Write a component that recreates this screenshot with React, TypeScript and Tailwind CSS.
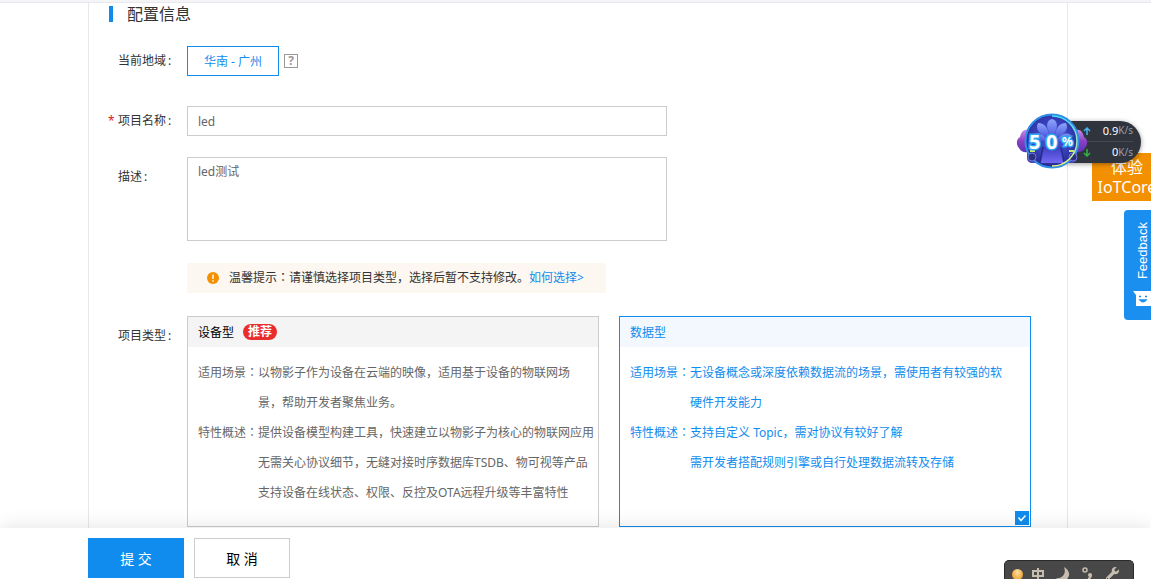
import { useState } from 'react';
import type { ReactNode } from 'react';
import { FaMoon, FaWrench } from 'react-icons/fa';

const projectTypes = [
  {
    id: 'device',
    title: '设备型',
    recommended: true,
    details: [
      {
        name: '适用场景',
        lines: ['以物影子作为设备在云端的映像，适用基于设备的物联网场', '景，帮助开发者聚焦业务。'],
      },
      {
        name: '特性概述',
        lines: [
          '提供设备模型构建工具，快速建立以物影子为核心的物联网应用',
          '无需关心协议细节，无缝对接时序数据库TSDB、物可视等产品',
          '支持设备在线状态、权限、反控及OTA远程升级等丰富特性',
        ],
      },
    ],
  },
  {
    id: 'data',
    title: '数据型',
    recommended: false,
    details: [
      {
        name: '适用场景',
        lines: ['无设备概念或深度依赖数据流的场景，需使用者有较强的软', '硬件开发能力'],
      },
      {
        name: '特性概述',
        lines: ['支持自定义 Topic，需对协议有较好了解', '需开发者搭配规则引擎或自行处理数据流转及存储'],
      },
    ],
  },
];

// the TC face centres the full-width colon in its cell
function Colon() {
  return <span className="font-['Noto_Sans_CJK_TC',sans-serif] leading-none">：</span>;
}

function FieldLabel({ htmlFor, id, required, children }: { htmlFor?: string; id?: string; required?: boolean; children: ReactNode }) {
  return (
    <label htmlFor={htmlFor} id={id} className="flex w-[98px] shrink-0 pl-[19px] leading-[30px] text-[#333]">
      <span className="w-[10px] text-[#e02020]">{required ? '*' : ''}</span>
      {children}
      <span className="ml-0.5">:</span>
    </label>
  );
}

function TypeCard({ type, checked, onSelect }: { type: (typeof projectTypes)[number]; checked: boolean; onSelect: () => void }) {
  return (
    <label className={`relative block w-[412px] cursor-pointer border whitespace-nowrap ${checked ? 'border-[#108cee] text-[#108cee]' : 'border-[#ccc] text-[#666]'}`}>
      <div className={`flex h-[30px] items-center gap-[9px] px-[10px] ${checked ? 'bg-[#f3f8fe]' : 'bg-[#f4f4f4] text-black'}`}>
        <span className="pt-px">{type.title}</span>
        {type.recommended && <span className="h-4 rounded-full bg-[#e92d2d] px-[5px] leading-4 font-bold text-white">推荐</span>}
      </div>
      <dl className="px-[10px] pt-[11px] pb-[18px] leading-[30px]">
        {type.details.map((d) => (
          <div key={d.name} className="flex">
            <dt>
              {d.name}
              <Colon />
            </dt>
            <dd>
              {d.lines.map((line) => (
                <p key={line}>{line}</p>
              ))}
            </dd>
          </div>
        ))}
      </dl>
      <input
        type="radio"
        name="projectType"
        aria-label={type.title}
        checked={checked}
        onChange={onSelect}
        className="absolute right-px bottom-px size-[14px] appearance-none checked:bg-[#108cee]"
      />
      {checked && (
        <svg className="pointer-events-none absolute right-px bottom-px size-[14px]" viewBox="0 0 14 14" fill="none" stroke="#fff" strokeWidth="1.5">
          <path d="M3.5 6.5 6 9.5 10.5 4.5" />
        </svg>
      )}
    </label>
  );
}

function SpeedWidget() {
  return (
    <div className="absolute top-[109px] right-[10px] flex h-[66px] w-[125px] items-center justify-end">
      <div className="h-[42px] w-[76px] rounded-r-full bg-[#30343d] pr-2 text-right text-[11px] text-white shadow-[0_1px_5px_rgba(0,0,0,0.4)]">
        <div className="flex h-[21px] items-center border-b border-[#454a54] pl-[18px]">
          <svg className="size-2" viewBox="0 0 8 8" fill="none" stroke="#45b6f2" strokeWidth="1.5">
            <path d="M4 8V1M1 4l3-3 3 3" />
          </svg>
          <span className="flex-1">0.9</span>
          <span className="text-[10px] text-[#9a9ea6]">K/s</span>
        </div>
        <div className="flex h-[21px] items-center pl-[18px]">
          <svg className="size-2" viewBox="0 0 8 8" fill="none" stroke="#2fb344" strokeWidth="1.5">
            <path d="M4 0v7M1 4l3 3 3-3" />
          </svg>
          <span className="flex-1">0</span>
          <span className="text-[10px] text-[#9a9ea6]">K/s</span>
        </div>
      </div>
      <svg className="absolute top-0 left-0 h-[66px] w-[74px]" viewBox="0 0 74 66">
        <defs>
          <radialGradient id="dome" cx="0.5" cy="0.45" r="0.55">
            <stop offset="0" stopColor="#4b55d8" />
            <stop offset="0.7" stopColor="#343bb4" />
            <stop offset="1" stopColor="#252a8c" />
          </radialGradient>
          <linearGradient id="ear" x1="0" y1="0" x2="0" y2="1">
            <stop offset="0" stopColor="#c98aea" />
            <stop offset="0.5" stopColor="#8a3fc4" />
            <stop offset="1" stopColor="#5a35b4" />
          </linearGradient>
          <linearGradient id="petal" x1="0" y1="0" x2="0" y2="1">
            <stop offset="0" stopColor="#8fa4fa" />
            <stop offset="1" stopColor="#4b5ade" />
          </linearGradient>
          <linearGradient id="seat" x1="0" y1="0" x2="0" y2="1">
            <stop offset="0" stopColor="#3b3fc0" />
            <stop offset="1" stopColor="#7468f2" />
          </linearGradient>
          <linearGradient id="ring" x1="0" y1="0" x2="0" y2="1">
            <stop offset="0" stopColor="#43e0ff" />
            <stop offset="1" stopColor="#e6f27a" />
          </linearGradient>
        </defs>
        <path d="M12 21c-5-1-7 3-8 7-4 2-4 8-1 11 2 4 6 5 9 4z" fill="url(#ear)" />
        <path d="M60 21c5-1 7 3 8 7 4 2 4 8 1 11-2 4-6 5-9 4z" fill="url(#ear)" />
        <path d="M11 36h50v13q0 4-4 5H15q-4-1-4-5z" fill="#4641b4" />
        <circle cx="36" cy="32" r="26.500" fill="url(#dome)" stroke="#2f8fe6" strokeWidth="2" />
        <g fill="url(#petal)">
          <path d="M36 28c-7-9-6-17 0-18 6 1 7 9 0 18z" />
          <path d="M33 28c-10-2-14-8-11-14 7 0 11 6 11 14zM39 28c10-2 14-8 11-14-7 0-11 6-11 14z" />
          <path d="M31 31c-8 3-14 0-14-5 5-3 11-1 14 5zM41 31c8 3 14 0 14-5-5-3-11-1-14 5z" opacity=".8" />
        </g>
        <path d="M27 38h18l3 16H24z" fill="url(#seat)" />
        <path d="M27 38l-3 16M45 38l3 16" stroke="#252a8c" strokeWidth="1.500" />
        <circle cx="16" cy="48" r="4" fill="#2d3080" stroke="#6f78d8" />
        <circle cx="57" cy="48" r="4" fill="#2d3080" stroke="#6f78d8" />
        <path d="M14 42h5M53 42h5" stroke="#c8e66a" strokeWidth="2" />
        <path d="M36 7a25 25 0 0 1 0 50" fill="none" stroke="url(#ring)" strokeWidth="1.500" />
        <g fill="#fff" stroke="#2ba6f5" strokeWidth="3" paintOrder="stroke" fontFamily="Noto Sans, sans-serif" fontWeight="bold">
          <text x="13" y="40" fontSize="20">5</text>
          <text x="30" y="40" fontSize="20">0</text>
          <text x="46" y="37" fontSize="12">%</text>
        </g>
      </svg>
    </div>
  );
}

function InputMethodBar() {
  return (
    <div className="absolute right-[17px] bottom-0 flex h-[19px] w-[130px] items-start gap-[11px] overflow-hidden rounded-t-[5px] border border-b-0 border-[#2a2a2a] bg-[#484848] px-[7px] pt-[6px] text-[#c6bdaf]">
      <span className="mt-[2px] size-[11px] shrink-0 rounded-full bg-radial-[at_50%_30%] from-[#ffe3a0] to-[#e88a14]" />
      <svg className="mt-px -ml-[3px] h-[13px] w-[14px] shrink-0" viewBox="0 0 14 13" fill="none" stroke="currentColor" strokeWidth="2">
        <path d="M2 3h10v5H2zM7 0v13" />
      </svg>
      <svg className="size-[14px] shrink-0" viewBox="0 0 14 14" fill="currentColor">
        <path d="M8 0c5 3 7 8 3 12-3 3-8 2-11-1 5 1 11-3 8-11z" />
      </svg>
      <svg className="size-[14px] shrink-0" viewBox="0 0 14 14" fill="none" stroke="currentColor">
        <circle cx="4" cy="3" r="2" strokeWidth="1.500" />
        <circle cx="9" cy="8" r="2" fill="currentColor" stroke="none" />
        <path d="M10 8q0 3-3 4" strokeWidth="2" />
      </svg>
      <FaWrench className="size-[13px] shrink-0" />
    </div>
  );
}

export default function App() {
  const [name, setName] = useState('led');
  const [desc, setDesc] = useState('led测试');
  const [selected, setSelected] = useState('data');

  return (
    <div className="relative flex h-screen flex-col overflow-hidden bg-white font-['Noto_Sans','Noto_Sans_CJK_SC',sans-serif] text-xs">
      <div className="h-[3px] shrink-0 border-b border-[#e8e8ee] bg-[#f5f5f8]" />
      <main className="mr-[83px] ml-[88px] min-h-0 flex-1 overflow-hidden border-x border-[#e8e8e8] pt-[3px]">
        <h2 className="ml-5 flex border-l-4 border-[#108cee] pl-[14px] text-base leading-4 text-[#333]">配置信息</h2>

        <form id="project-form" onSubmit={(e) => e.preventDefault()}>
          <div className="mt-6 flex items-center">
            <FieldLabel htmlFor="region">当前地域</FieldLabel>
            <button id="region" type="button" className="h-[30px] w-[92px] border border-[#108cee] pt-px text-[#108cee]">
              华南 - 广州
            </button>
            <span className="ml-[5px] size-[14px] border border-[#999] text-center leading-3 font-bold text-[#999]">?</span>
          </div>

          <div className="mt-[30px] flex">
            <FieldLabel htmlFor="name" required>项目名称</FieldLabel>
            <input
              id="name"
              value={name}
              onChange={(e) => setName(e.target.value)}
              className="h-[30px] w-[480px] border border-[#ccc] px-[10px] text-[#666] outline-none"
            />
          </div>

          <div className="mt-[21px] flex">
            <div className="pt-[5px]">
              <FieldLabel htmlFor="desc">描述</FieldLabel>
            </div>
            <textarea
              id="desc"
              value={desc}
              onChange={(e) => setDesc(e.target.value)}
              className="h-[84px] w-[480px] resize-none border border-[#ccc] px-[10px] py-1 leading-5 text-[#666] outline-none"
            />
          </div>

          <div className="mt-[22px] ml-[98px] flex h-[30px] w-[419px] items-center gap-[10px] bg-[#fcf7f1] px-5 whitespace-nowrap text-[#333]">
            <svg className="size-3 shrink-0" viewBox="0 0 12 12">
              <circle cx="6" cy="6" r="6" fill="#f39000" />
              <path d="M6 2.5v4.500M6 8.200v1.500" stroke="#fff" strokeWidth="1.400" />
            </svg>
            <p>
              温馨提示
              <Colon />
              请谨慎选择项目类型，选择后暂不支持修改。
              <a href="#" className="text-[#108cee]">如何选择&gt;</a>
            </p>
          </div>

          <div className="mt-[23px] flex">
            <div className="pt-[5px]">
              <FieldLabel id="type-label">项目类型</FieldLabel>
            </div>
            <div role="radiogroup" aria-labelledby="type-label" className="flex gap-5">
              {projectTypes.map((type) => (
                <TypeCard key={type.id} type={type} checked={selected === type.id} onSelect={() => setSelected(type.id)} />
              ))}
            </div>
          </div>
        </form>
      </main>

      <footer className="relative flex shrink-0 gap-[10px] bg-white pt-[10px] pb-px pl-[88px] text-sm shadow-[0_0_20px_rgba(0,0,0,0.12)]">
        <button type="submit" form="project-form" className="h-10 w-24 bg-[#108cee] pt-px text-white">提 交</button>
        <button type="button" className="h-10 w-24 border border-[#ccc] pt-px text-black">取 消</button>
      </footer>

      <a href="#" className="absolute top-[153px] -right-[11px] h-12 w-[70px] bg-[#f39000] pt-1 text-center text-base leading-5 text-white">
        体验
        <br />
        IoTCore
      </a>
      <SpeedWidget />
      <button type="button" className="absolute top-[210px] -right-[11px] flex h-[110px] w-[38px] flex-col items-center justify-between rounded-l bg-[#1a8ff0] pt-3 pb-[14px] font-['Liberation_Sans',sans-serif] text-[13px] leading-4 text-white">
        <span className="rotate-180 [writing-mode:vertical-rl]">Feedback</span>
        <svg className="h-[15px] w-5" viewBox="0 0 20 15">
          <path d="M0 0h20v15H3V4z" fill="#fff" />
          <path d="M6 5.500h2M12 5.500h2M7 9q3 3.500 6 0z" fill="#1a8ff0" stroke="#1a8ff0" strokeWidth="1.500" />
        </svg>
      </button>
      <InputMethodBar />
    </div>
  );
}
